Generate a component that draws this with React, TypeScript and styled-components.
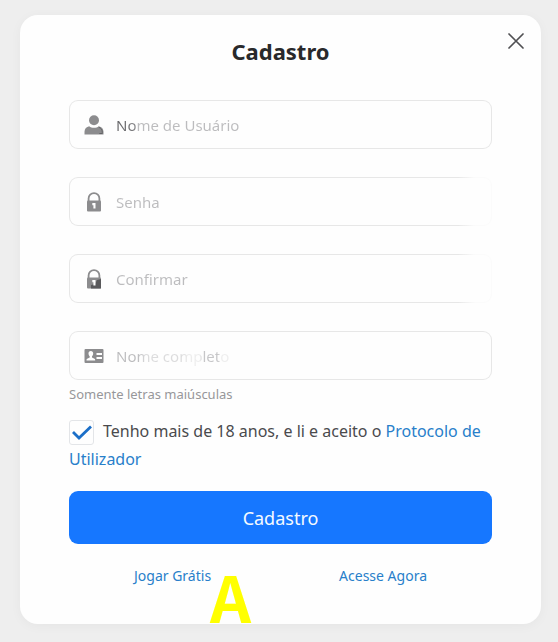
import React from "react";
import styled, { createGlobalStyle } from "styled-components";

const GlobalStyle = createGlobalStyle`
  *, *::before, *::after { box-sizing: border-box; }
  body {
    margin: 0;
    background: #eeeeee;
    font-family: "Noto Sans", "Open Sans", sans-serif;
    color: #4a4a4d;
  }
  button, input { font: inherit; }
`;

const Page = styled.main`
  padding: 15px 17px 18px 20px;
`;

const Card = styled.section`
  position: relative;
  padding: 20px 49px 35px;
  border-radius: 18px;
  background: #fefefe;
  box-shadow: 0 2px 12px rgba(0, 0, 0, 0.04);
`;

const Title = styled.h1`
  margin: 0 0 33px;
  font-size: 22px;
  line-height: 32px;
  font-weight: 700;
  text-align: center;
  color: #29292b;
`;

const CloseButton = styled.button`
  position: absolute;
  top: 16px;
  right: 15px;
  display: grid;
  place-items: center;
  width: 20px;
  height: 20px;
  padding: 0;
  border: 0;
  background: none;
  color: #505053;
  cursor: pointer;
`;

const Fields = styled.div`
  display: flex;
  flex-direction: column;
  gap: 28px;
`;

const Field = styled.label<{ $faded?: boolean }>`
  display: flex;
  align-items: center;
  gap: 12px;
  height: 49px;
  padding: 0 14px;
  border: 1px solid transparent;
  border-radius: 9px;
  background:
    linear-gradient(#fefefe, #fefefe) padding-box,
    linear-gradient(90deg, #e7e7e7 92%, ${(p) => (p.$faded ? "#fbfbfb" : "#e7e7e7")} 96%) border-box;
  color: #8c8c8e;

  svg { flex: none; }
`;

const TextInput = styled.input<{ $ink: string }>`
  flex: 1;
  min-width: 0;
  padding: 0;
  border: 0;
  outline: 0;
  background: transparent;
  font-size: 15px;
  line-height: 24px;
  color: #4a4a4d;

  &::placeholder {
    opacity: 1;
    color: transparent;
    background: ${(p) => p.$ink};
    background-clip: text;
    -webkit-background-clip: text;
  }
`;

const Hint = styled.p`
  margin: 4px 0 13px;
  font-size: 13px;
  line-height: 20px;
  color: #97979a;
`;

const Consent = styled.div`
  margin-bottom: 18px;
  font-size: 16px;
  line-height: 28px;
`;

const CheckBox = styled.input`
  appearance: none;
  width: 25px;
  height: 25px;
  margin: 0 9px 0 0;
  vertical-align: middle;
  border: 1px solid #e3e5e8;
  border-radius: 3px;
  background: #fefefe;

  &:checked {
    background: #fefefe
      url("data:image/svg+xml,%3Csvg xmlns='http://www.w3.org/2000/svg' viewBox='0 0 23 23'%3E%3Cpath d='M3 11l6 6L21 5.500' fill='none' stroke='%231b6fc8' stroke-width='2.8'/%3E%3C/svg%3E")
      center / contain no-repeat;
  }
`;

const Link = styled.a`
  color: #287fca;
  text-decoration: none;
`;

const SubmitButton = styled.button`
  display: block;
  width: 100%;
  height: 53px;
  border: 0;
  border-radius: 9px;
  background: #1677ff;
  color: #f4faff;
  font-size: 18px;
  cursor: pointer;
`;

const Footer = styled.nav`
  display: flex;
  justify-content: center;
  gap: 128px;
  margin-top: 20px;
  padding-bottom: 1px;
  font-size: 14px;
  line-height: 24px;
`;

const Mark = styled.span`
  position: absolute;
  bottom: 5px;
  left: 190px;
  font-family: "Noto Sans CJK SC", sans-serif;
  font-size: 64px;
  line-height: 48px;
  font-weight: 700;
  color: #ffff00;
`;

const UserIcon = () => (
  <svg width="20" height="20" viewBox="0 0 20 20" fill="currentColor" aria-hidden="true">
    <circle cx="10" cy="5.3" r="5" />
    <path d="M.5 19.5v-2.7c0-3 2-5 4.7-5.5 1.2 1 2.8 1.5 4.8 1.500s3.600-.5 4.800-1.500c2.700.5 4.700 2.500 4.700 5.500v2.700z" />
    <path d="M14.800 12.300c2.200.8 3.500 2.500 3.500 5v1.200h-3" fill="none" stroke="#646467" strokeWidth="1" />
  </svg>
);

const LockIcon = ({ shaded = false }: { shaded?: boolean }) => (
  <svg width="20" height="20" viewBox="0 0 20 20" aria-hidden="true">
    <path d="M4.600 9V6.500a5.400 5.400 0 0 1 10.800 0V9" fill="none" stroke="currentColor" strokeWidth="1.800" />
    <rect x="3" y="8.500" width="14" height="11" rx="1" fill="currentColor" />
    {shaded && <path d="M7 19.500v-3.500l4-1 2-4 4-1v9.500z" fill="#59595c" />}
    <path d="M8.300 11h3.200v5.500H9.400v-3.200H8.300z" fill="#fefefe" />
  </svg>
);

const IdIcon = () => (
  <svg width="20" height="20" viewBox="0 0 20 20" aria-hidden="true">
    <rect x=".5" y="3" width="19" height="14" rx="1" fill="currentColor" />
    <path d="M6.800 5c1.500 0 2.400 1 2.400 2.600 0 1.200-.5 2.200-1.200 2.700v1.200l2.500 1.300c.5.3.7.7.7 1.700H2.500c0-1 .2-1.400.7-1.700l2.500-1.300v-1.200c-.7-.5-1.200-1.500-1.200-2.700C4.500 6 5.300 5 6.800 5z" fill="#fefefe" />
    <path d="M12.500 8h5.500M12.500 12h5.500" stroke="#fefefe" strokeWidth="1.800" />
  </svg>
);

const plainInk = "linear-gradient(#bcbcbe, #bcbcbe)";

const fields = [
  {
    name: "usuario",
    type: "text",
    placeholder: "Nome de Usuário",
    icon: <UserIcon />,
    faded: false,
    ink: "linear-gradient(90deg, #68686b 10px, #858588 19px, #bcbcbe 21px)",
  },
  { name: "senha", type: "password", placeholder: "Senha", icon: <LockIcon />, faded: true, ink: plainInk },
  { name: "confirmar", type: "password", placeholder: "Confirmar", icon: <LockIcon shaded />, faded: true, ink: plainInk },
  {
    name: "nome",
    type: "text",
    placeholder: "Nome completo",
    icon: <IdIcon />,
    faded: false,
    ink: "linear-gradient(90deg, #bcbcbe 22px, #dcdcdd 30px, #dcdcdd 66px, #ececec 72px, #eeeeee 84px, #c6c6c8 87px, #c6c6c8 102px, #eeeeee 105px)",
  },
];

export default function App() {
  return (
    <>
      <GlobalStyle />
      <Page>
        <Card aria-labelledby="title">
          <Title id="title">Cadastro</Title>
          <CloseButton type="button" aria-label="Fechar">
            <svg width="18" height="18" viewBox="0 0 18 18" aria-hidden="true">
              <path d="M2 2l14 14M16 2L2 16" stroke="currentColor" strokeWidth="1.700" strokeLinecap="round" />
            </svg>
          </CloseButton>
          <form onSubmit={(e) => e.preventDefault()}>
            <Fields>
              {fields.map((f) => (
                <Field key={f.name} $faded={f.faded}>
                  {f.icon}
                  <TextInput
                    name={f.name}
                    type={f.type}
                    placeholder={f.placeholder}
                    aria-label={f.placeholder}
                    $ink={f.ink}
                  />
                </Field>
              ))}
            </Fields>
            <Hint>Somente letras maiúsculas</Hint>
            <Consent>
              <CheckBox id="consent" type="checkbox" defaultChecked />
              <label htmlFor="consent">Tenho mais de 18 anos, e li e aceito o </label>
              <Link href="#protocolo">Protocolo de Utilizador</Link>
            </Consent>
            <SubmitButton type="submit">Cadastro</SubmitButton>
          </form>
          <Footer>
            <Link href="#jogar">Jogar Grátis</Link>
            <Link href="#acesse">Acesse Agora</Link>
          </Footer>
          <Mark>A</Mark>
        </Card>
      </Page>
    </>
  );
}
